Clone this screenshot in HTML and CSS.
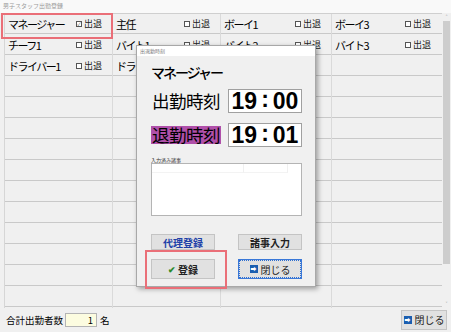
FILE: index.html
```html
<!DOCTYPE html>
<html lang="ja">
<head>
    <meta charset="UTF-8">
    <title>男子スタッフ出勤登録</title>
    <link rel="stylesheet" href="styles.css">
</head>
<body>
    <div class="window">
        <div class="window-title">男子スタッフ出勤登録</div>

        <div class="main">
            <div class="staff-grid">
                <div class="cell"><span class="name">マネージャー</span><span class="check"><i class="box checked">✓</i>出退</span></div>
                <div class="cell"><span class="name">主任</span><span class="check"><i class="box"></i>出退</span></div>
                <div class="cell"><span class="name">ボーイ1</span><span class="check"><i class="box"></i>出退</span></div>
                <div class="cell"><span class="name">ボーイ3</span><span class="check"><i class="box"></i>出退</span></div>

                <div class="cell"><span class="name">チーフ1</span><span class="check"><i class="box"></i>出退</span></div>
                <div class="cell"><span class="name">バイト1</span><span class="check"><i class="box"></i>出退</span></div>
                <div class="cell"><span class="name">バイト2</span><span class="check"><i class="box"></i>出退</span></div>
                <div class="cell"><span class="name">バイト3</span><span class="check"><i class="box"></i>出退</span></div>

                <div class="cell"><span class="name">ドライバー1</span><span class="check"><i class="box"></i>出退</span></div>
                <div class="cell"><span class="name">ドライバー2</span><span class="check"><i class="box"></i>出退</span></div>
                <div class="cell"></div>
                <div class="cell"></div>
            </div>
            <div class="scrollbar">
                <span class="arrow">˄</span>
                <div class="thumb"></div>
                <span class="arrow">˅</span>
            </div>
        </div>

        <div class="footer">
            <span class="total-label">合計出勤者数</span>
            <span class="total-box">1</span>
            <span class="total-unit">名</span>
            <button class="btn close-main"><span class="exit-icon">➡</span>閉じる</button>
        </div>

        <div class="highlight cell-mark"></div>

        <div class="dialog">
            <div class="dialog-title">出退勤時刻</div>
            <div class="dialog-body">
                <div class="staff-name">マネージャー</div>
                <div class="time-row">
                    <span class="time-label">出勤時刻</span>
                    <span class="time-box">19<span class="colon">:</span>00</span>
                </div>
                <div class="time-row">
                    <span class="time-label out">退勤時刻</span>
                    <span class="time-box">19<span class="colon">:</span>01</span>
                </div>
                <div class="memo-label">入力済み諸事</div>
                <div class="memo-box">
                    <div class="memo-head"><span></span><span></span><span></span></div>
                </div>
                <div class="dialog-buttons">
                    <button class="btn proxy">代理登録</button>
                    <button class="btn">諸事入力</button>
                    <button class="btn"><span class="tick">✔</span>登録</button>
                    <button class="btn focused"><span class="exit-icon">➡</span>閉じる</button>
                </div>
            </div>
        </div>

        <div class="highlight btn-mark"></div>
    </div>
</body>
</html>
```

FILE: styles.css
```css
body {
    margin: 0;
    font-family: "Noto Sans CJK JP", "Noto Sans", sans-serif;
    background: #f0f0f0;
    color: #000;
}
.window {
    position: relative;
    width: 451px;
    height: 332px;
    overflow: hidden;
    background: #f0f0f0;
}
.window-title {
    height: 13px;
    line-height: 11px;
    padding-left: 3px;
    font-size: 6px;
    color: #9a9a9a;
    background: #f9f9f9;
}
.main {
    display: flex;
    padding-left: 4px;
}
.staff-grid {
    display: grid;
    grid-template-columns: 108px 108px 111px 110px;
    grid-auto-rows: 20px;
    width: 438px;
    height: 295px;
    box-sizing: border-box;
    border-top: 1px solid #cfcfcf;
    border-left: 1px solid #d6d6d6;
    background-color: #f0f0f0;
    background-image: linear-gradient(to bottom, transparent 20px, #c9c9c9 20px);
    background-size: 100% 21px;
    background-position: 0 -1px;
    align-content: start;
    row-gap: 1px;
    position: relative;
}
.staff-grid::after {
    content: "";
    position: absolute;
    top: 0;
    bottom: 0;
    left: 0;
    right: 0;
    background-image:
        linear-gradient(#dadada, #dadada),
        linear-gradient(#dadada, #dadada),
        linear-gradient(#dadada, #dadada);
    background-size: 1px 100%;
    background-repeat: no-repeat;
    background-position: 107px 0, 215px 0, 326px 0;
    pointer-events: none;
}
.cell {
    display: flex;
    align-items: center;
    justify-content: space-between;
    padding: 0 11px 0 3px;
    font-size: 11px;
    line-height: 20px;
    white-space: nowrap;
    overflow: hidden;
}
.name {
    letter-spacing: -1.5px;
}
.check {
    display: flex;
    align-items: center;
    font-size: 9px;
    color: #222;
}
.box {
    display: inline-block;
    width: 4px;
    height: 4px;
    margin-right: 2px;
    border: 1px solid #555;
    background: #fff;
    font-style: normal;
    font-size: 5px;
    line-height: 4px;
    text-align: center;
    color: #555;
    overflow: hidden;
}
.scrollbar {
    width: 9px;
    height: 295px;
    display: flex;
    flex-direction: column;
    align-items: center;
    background: #f0f0f0;
}
.arrow {
    height: 8px;
    font-size: 6px;
    line-height: 8px;
    color: #888;
}
.thumb {
    flex: 1;
    width: 7px;
    margin: 0 0 36px;
    background: #cdcdcd;
}
.footer {
    display: flex;
    align-items: center;
    height: 23px;
    padding: 0 4px 0 6px;
    font-size: 9.5px;
}
.total-box {
    width: 32px;
    height: 14px;
    margin-left: 2px;
    padding-right: 3px;
    box-sizing: border-box;
    border: 1px solid #b4b4b4;
    background: #fcfce0;
    text-align: right;
    line-height: 12px;
}
.total-unit {
    margin-left: 3px;
}
.btn {
    display: flex;
    align-items: center;
    justify-content: center;
    font-family: inherit;
    font-size: 10px;
    color: #222;
    background: #e1e1e1;
    border: 1px solid #c4c4c4;
    padding: 0;
    cursor: pointer;
}
.close-main {
    margin-left: auto;
    width: 46px;
    height: 20px;
}
.exit-icon {
    display: inline-block;
    width: 8px;
    height: 8px;
    margin-right: 3px;
    background: #1b5eb0;
    color: #fff;
    font-size: 6px;
    line-height: 8px;
    text-align: center;
}
.highlight {
    position: absolute;
    border: 2px solid #ea6f78;
    box-sizing: border-box;
}
.cell-mark {
    left: 1px;
    top: 13px;
    width: 112px;
    height: 26px;
}
.btn-mark {
    left: 145px;
    top: 250px;
    width: 82px;
    height: 39px;
}
.dialog {
    position: absolute;
    left: 136px;
    top: 45px;
    width: 180px;
    height: 242px;
    box-sizing: border-box;
    border: 1px solid #a8a8a8;
    background: #f0f0f0;
    box-shadow: 2px 2px 5px rgba(0, 0, 0, 0.35);
}
.dialog-title {
    height: 10px;
    line-height: 10px;
    padding-left: 3px;
    font-size: 5px;
    color: #777;
    background: #fff;
}
.dialog-body {
    padding: 5px 13px 0 14px;
}
.staff-name {
    font-size: 14px;
    font-weight: 500;
    line-height: 22px;
    letter-spacing: -2px;
    margin-bottom: 6px;
}
.time-row {
    display: flex;
    align-items: center;
    justify-content: space-between;
    margin-bottom: 10px;
}
.time-label {
    font-size: 17.5px;
    line-height: 18px;
    padding: 0 1px;
    letter-spacing: -0.5px;
}
.time-label.out {
    background: #b050aa;
}
.time-box {
    width: 74px;
    height: 24px;
    box-sizing: border-box;
    border: 1px solid #a0a0a0;
    background: #fff;
    font-family: "Liberation Sans", sans-serif;
    font-size: 23px;
    font-weight: bold;
    line-height: 22px;
    text-align: center;
    white-space: nowrap;
}
.colon {
    margin: 0 4px;
    position: relative;
    top: -2px;
}
.memo-label {
    font-size: 5px;
    line-height: 7px;
    color: #333;
    margin-top: -1px;
}
.memo-box {
    height: 51px;
    border: 1px solid #b4b4b4;
    background: #fff;
}
.memo-head {
    display: flex;
    height: 9px;
}
.memo-head span {
    border-right: 1px solid #f0f0f0;
    border-bottom: 1px solid #f3f3f3;
}
.memo-head span:nth-child(1) { width: 91px; }
.memo-head span:nth-child(2) { width: 43px; }
.memo-head span:nth-child(3) { flex: 1; border: none; }
.dialog-buttons {
    display: grid;
    grid-template-columns: 64px 64px;
    justify-content: space-between;
    row-gap: 9px;
    margin-top: 18px;
}
.dialog-buttons .btn {
    font-size: 10px;
    font-weight: bold;
}
.dialog-buttons .btn:nth-child(-n+2) {
    height: 16px;
}
.dialog-buttons .btn:nth-child(n+3) {
    height: 20px;
}
.proxy {
    color: #2040a8;
}
.tick {
    color: #2a8a2a;
    margin-right: 2px;
    font-size: 9px;
}
.focused {
    font-weight: normal !important;
    outline: 1px dotted #2f6fd0;
    outline-offset: -2px;
    border-color: #3a78d8;
}
```
